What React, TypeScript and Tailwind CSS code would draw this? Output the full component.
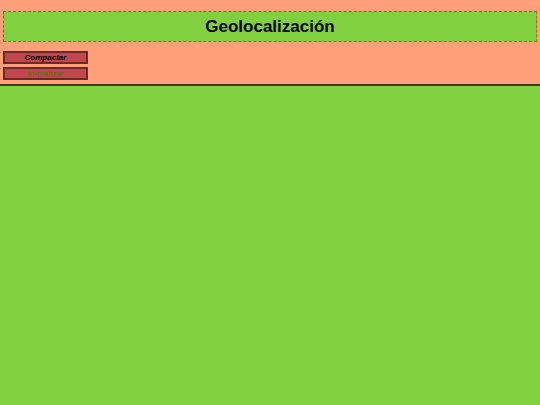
export default function App() {
  return (
    <div className="flex min-h-[405px] flex-col bg-[#80d040] font-['Liberation_Sans',Arial,sans-serif]">
      <header className="border-b-2 border-[#4a3518] bg-[#ffa07a] px-[3px] pb-[4px] pt-[11px]">
        <h1 className="flex h-[31px] items-center justify-center border border-dashed border-[#a0602a] bg-[#80d040] text-[17px] font-bold text-black">
          Geolocalización
        </h1>
        <div className="mt-[9px] flex flex-col gap-[3px]">
          <button className="flex h-[13px] w-[85px] items-center justify-center border-2 border-[#6a2a28] bg-[#c0484c] text-[8px] font-bold italic leading-none text-black">
            Compactar
          </button>
          <button className="flex h-[13px] w-[85px] items-center justify-center border-2 border-[#6a2a28] bg-[#c0484c] text-[8px] font-bold italic leading-none text-[#6b6a10]">
            Inicializar
          </button>
        </div>
      </header>
      <main className="flex-1" />
    </div>
  );
}
